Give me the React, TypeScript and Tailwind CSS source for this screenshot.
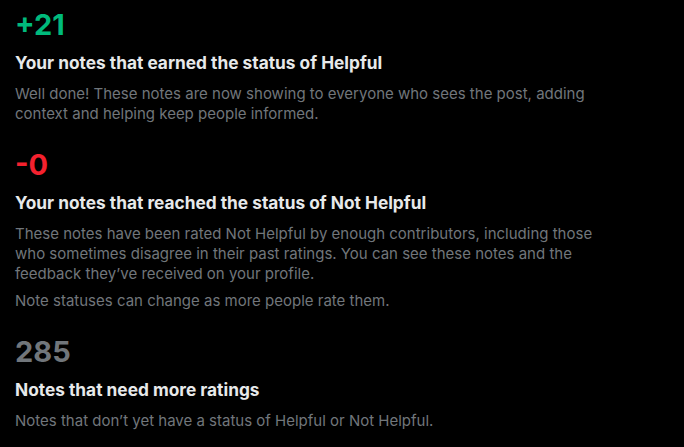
const sections = [
  {
    value: "+21",
    tone: "text-[#00ba7c]",
    title: "Your notes that earned the status of Helpful",
    body: [
      "Well done! These notes are now showing to everyone who sees the post, adding context and helping keep people informed.",
    ],
  },
  {
    value: "-0",
    tone: "text-[#f4212e]",
    title: "Your notes that reached the status of Not Helpful",
    body: [
      "These notes have been rated Not Helpful by enough contributors, including those who sometimes disagree in their past ratings. You can see these notes and the feedback they\u2019ve received on your profile.",
      "Note statuses can change as more people rate them.",
    ],
  },
  {
    value: "285",
    tone: "text-[#71767b]",
    title: "Notes that need more ratings",
    body: ["Notes that don\u2019t yet have a status of Helpful or Not Helpful."],
  },
];

export default function App() {
  return (
    <main className="min-h-screen bg-black font-['Inter',_'Noto_Sans',_sans-serif]">
      <div className="flex w-[630px] flex-col gap-[23px] px-[15px] pt-[7px]">
        {sections.map((s) => (
          <section key={s.value}>
            <p className={`text-[29px] font-bold leading-[36px] ${s.tone}`}>{s.value}</p>
            <h2 className="mt-[10px] text-[17.3px] font-bold leading-5 text-[#e7e9ea]">{s.title}</h2>
            <div className="mt-[11px] flex flex-col gap-[7px]">
              {s.body.map((line) => (
                <p key={line} className="text-[15px] leading-5 text-[#71767b]">
                  {line}
                </p>
              ))}
            </div>
          </section>
        ))}
      </div>
    </main>
  );
}
